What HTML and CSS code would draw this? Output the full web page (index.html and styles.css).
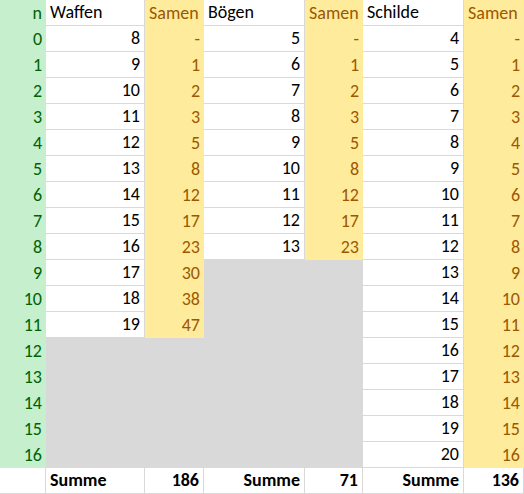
FILE: index.html
```html
<!DOCTYPE html>
<html lang="de">
<head>
<meta charset="utf-8">
<link rel="stylesheet" href="styles.css">
</head>
<body>
<div class="sheet" id="sheet"></div>
<script src="app.js"></script>
</body>
</html>
```

FILE: styles.css
```css
html, body {
  margin: 0;
  padding: 0;
  background: #ffffff;
}
.sheet {
  display: grid;
  grid-template-columns: 46px 99px 59px 101px 58px 101px 60px;
  grid-auto-rows: 26px;
  width: 524px;
  font-family: Carlito, Lato, "Liberation Sans", sans-serif;
  font-size: 18px;
  color: #000000;
}
.cell {
  box-sizing: border-box;
  padding: 0 4px 3px 4px;
  display: flex;
  align-items: flex-end;
  justify-content: flex-end;
  line-height: 20px;
  white-space: nowrap;
  overflow: hidden;
}
.left { justify-content: flex-start; }
.white {
  background: #ffffff;
  border-bottom: 1px solid #d9d9d9;
  border-right: 1px solid #d9d9d9;
}
.n {
  background: #c6efce;
  color: #006100;
}
.seed {
  background: #ffeb9c;
  color: #9c5700;
}
.gray { background: #d9d9d9; }
.sum {
  background: #ffffff;
  font-weight: bold;
  border-bottom: 1px solid #d9d9d9;
  border-right: 1px solid #d9d9d9;
}
```

FILE: app.js
```js
const waffen = [8,9,10,11,12,13,14,15,16,17,18,19];
const wSeed = ['-',1,2,3,5,8,12,17,23,30,38,47];
const boegen = [5,6,7,8,9,10,11,12,13];
const bSeed = ['-',1,2,3,5,8,12,17,23];
const schilde = [4,5,6,7,8,9,10,11,12,13,14,15,16,17,18,19,20];
const sSeed = ['-',1,2,3,4,5,6,7,8,9,10,11,12,13,14,15,16];
const sheet = document.getElementById('sheet');
function cell(cls, text) {
  const d = document.createElement('div');
  d.className = 'cell ' + cls;
  d.textContent = text;
  sheet.appendChild(d);
}
cell('n', 'n');
cell('white left', 'Waffen');
cell('seed left', 'Samen');
cell('white left', 'Bögen');
cell('seed left', 'Samen');
cell('white left', 'Schilde');
cell('seed left', 'Samen');
for (let i = 0; i < 17; i++) {
  cell('n', String(i));
  if (i < waffen.length) { cell('white', waffen[i]); cell('seed', wSeed[i]); }
  else { cell('gray', ''); cell('gray', ''); }
  if (i < boegen.length) { cell('white', boegen[i]); cell('seed', bSeed[i]); }
  else { cell('gray', ''); cell('gray', ''); }
  cell('white', schilde[i]); cell('seed', sSeed[i]);
}
cell('sum', '');
cell('sum left', 'Summe');
cell('sum', '186');
cell('sum', 'Summe');
cell('sum', '71');
cell('sum', 'Summe');
cell('sum', '136');
```
